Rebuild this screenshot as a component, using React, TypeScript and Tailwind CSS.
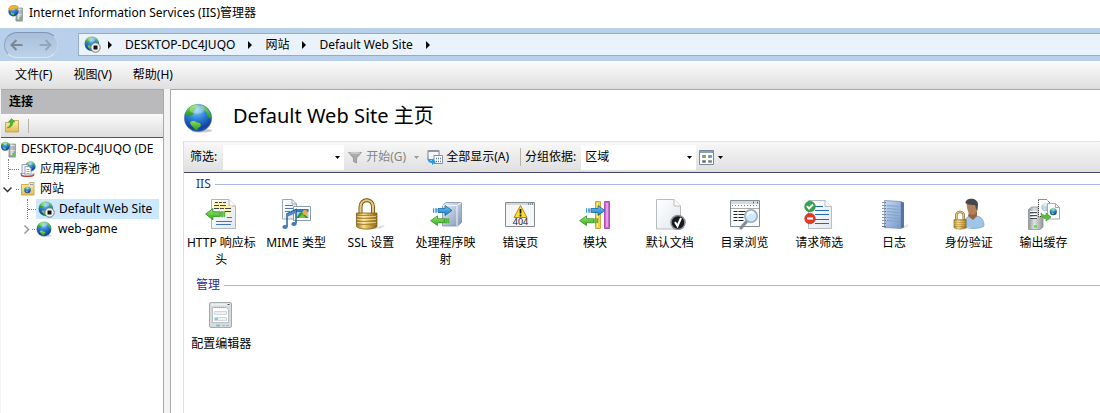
import type { ReactNode } from "react";

function Gradients() {
  return (
    <svg width="0" height="0" className="absolute" aria-hidden="true">
      <defs>
        <radialGradient id="sea" cx="0.45" cy="0.2" r="0.85">
          <stop offset="0" stopColor="#8fd4f2" />
          <stop offset="0.4" stopColor="#2f86d8" />
          <stop offset="0.8" stopColor="#163f9e" />
          <stop offset="1" stopColor="#2a5fc0" />
        </radialGradient>
        <linearGradient id="land" x1="0" y1="0" x2="0" y2="1">
          <stop offset="0" stopColor="#8be04e" />
          <stop offset="1" stopColor="#1f9a22" />
        </linearGradient>
        <linearGradient id="paper" x1="0" y1="0" x2="1" y2="1">
          <stop offset="0" stopColor="#ffffff" />
          <stop offset="1" stopColor="#e3e8ed" />
        </linearGradient>
        <linearGradient id="gold" x1="0" y1="0" x2="1" y2="0">
          <stop offset="0" stopColor="#a37a1e" />
          <stop offset="0.35" stopColor="#f5dc8a" />
          <stop offset="0.7" stopColor="#c49a38" />
          <stop offset="1" stopColor="#86621a" />
        </linearGradient>
        <linearGradient id="steel" x1="0" y1="0" x2="1" y2="1">
          <stop offset="0" stopColor="#e8eef6" />
          <stop offset="1" stopColor="#7f98ba" />
        </linearGradient>
        <linearGradient id="metal" x1="0" y1="0" x2="1" y2="0">
          <stop offset="0" stopColor="#8f9599" />
          <stop offset="0.4" stopColor="#dfe2e4" />
          <stop offset="1" stopColor="#92989c" />
        </linearGradient>
        <linearGradient id="green" x1="0" y1="0" x2="0" y2="1">
          <stop offset="0" stopColor="#9aec6c" />
          <stop offset="1" stopColor="#35a81d" />
        </linearGradient>
        <linearGradient id="blue" x1="0" y1="0" x2="0" y2="1">
          <stop offset="0" stopColor="#6cc8f5" />
          <stop offset="1" stopColor="#1b7ac6" />
        </linearGradient>
        <linearGradient id="notebook" x1="0" y1="0" x2="1" y2="1">
          <stop offset="0" stopColor="#c6d9f0" />
          <stop offset="1" stopColor="#7698c8" />
        </linearGradient>
        <linearGradient id="folder" x1="0" y1="0" x2="0" y2="1">
          <stop offset="0" stopColor="#fdf0b0" />
          <stop offset="1" stopColor="#e3bd55" />
        </linearGradient>
      </defs>
    </svg>
  );
}

function Earth() {
  return (
    <g>
      <circle cx="16" cy="16" r="14.7" fill="url(#sea)" stroke="#5f93b8" strokeWidth="0.5" />
      <path d="M2.4 11.5C4.500 5 9 2 14.500 1.500c1.500 1 .5 2-1 3 1 1.500 0 3-2 3.500-.5 2 1 2.500-.5 4-1.500 1.200-3 .5-4 2-1.500-1.500-3-.5-4.600-2.500Z" fill="url(#land)" />
      <path d="M8 20c2.500-1.500 5-.5 7 .8 2 .2 4.300 1 4 3.200-.5 2-3 2.500-3.500 4.500-1.200 1.300-3.500-.5-4.500-2.500C9.500 24 7 22.500 8 20Z" fill="url(#land)" />
      <path d="M19 2.200c3.500.8 7.500 4 9.300 7.300.8 2 1.900 4 1.900 6-1.500 1.500-2.700 1-3.700-1-1-1.500-.7-3-1.500-4.500-2-1-2.500-2.500-2-4-1.500-.5-3.500-1.800-4-3.800Z" fill="url(#land)" />
      <ellipse cx="15" cy="7" rx="8" ry="4.500" fill="#fff" opacity="0.3" />
    </g>
  );
}

function Globe({ className }: { className: string }) {
  return (
    <svg viewBox="0 0 32 32" className={className} aria-hidden="true">
      <ellipse cx="20" cy="29.500" rx="11" ry="2" fill="#000" opacity="0.2" />
      <Earth />
    </svg>
  );
}

function StoppedGlobe() {
  return (
    <svg viewBox="0 0 17 17" className="size-[17px] shrink-0" aria-hidden="true">
      <g transform="scale(0.49)"><Earth /></g>
      <circle cx="11.500" cy="11.500" r="4.700" fill="#f4f4f4" stroke="#666" strokeWidth="0.9" />
      <rect x="9.500" y="9.500" width="4" height="4" fill="#111" />
    </svg>
  );
}

function ServerIcon({ stamped = false }: { stamped?: boolean }) {
  return (
    <svg viewBox="0 0 16 17" className="h-[17px] w-4 shrink-0" aria-hidden="true">
      <path d="M8 3h6.500v12H8z" fill="url(#metal)" stroke="#8a9296" strokeWidth="0.7" />
      <path d="M9 5h5M9 7h5M9 9h5" stroke="#f5f7f8" />
      <path d="M9 6h5M9 8h5" stroke="#596268" strokeWidth="0.6" />
      <path d="M11.500 12h2.500v2h-2.500z" fill="#4ed12c" />
      <path d="M7 14.500h7l1 2H8z" fill="#8d9599" />
      <g transform={stamped ? "translate(0 1) scale(0.34)" : "translate(-0.5 0.5) scale(0.3)"}><Earth /></g>
      {stamped && <path d="M.5 4C2 0 6-.5 10 1.500L9 4.500C6 2.500 4 3 3 6Z" fill="#f2b62a" stroke="#c27d13" strokeWidth="0.5" />}
    </svg>
  );
}

function PoolIcon() {
  return (
    <svg viewBox="0 0 16 16" className="size-4 shrink-0" aria-hidden="true">
      <g transform="translate(5 0) scale(0.34)"><Earth /></g>
      <path d="M1 12c0 4 11 4 13 .5v2c-3 2-11 2-13 0Z" fill="#df5146" stroke="#8d3430" strokeWidth="0.5" />
      <path d="M2 3.500h6v9H2z" fill="#eef2f7" stroke="#8192a5" strokeWidth="0.8" />
      <path d="M5 5.500h4l2 2v6.500H5z" fill="#fff" stroke="#8192a5" strokeWidth="0.8" />
      <path d="M6.500 8.500h3M6.500 10.500h3M6.500 12.500h3" stroke="#8192a5" strokeWidth="0.8" />
    </svg>
  );
}

function SitesIcon() {
  return (
    <svg viewBox="0 0 16 16" className="size-4 shrink-0" aria-hidden="true">
      <path d="M1.500 3.500h7l1-2h4.500v12.500h-12.500z" fill="url(#folder)" stroke="#c69a38" strokeWidth="0.8" />
      <path d="M10 3.500h3" stroke="#6fa3cd" />
      <g transform="translate(4 5.500) scale(0.22)"><Earth /></g>
    </svg>
  );
}

function FolderUp() {
  return (
    <svg viewBox="0 0 16 16" className="size-4" aria-hidden="true">
      <path d="M1.500 4.500h6l1.500-2h5.500v11.500h-13z" fill="url(#folder)" stroke="#bf9a45" strokeWidth="0.8" />
      <path d="M3 10C5.500 9 6.500 6.500 6.500 4H4.500L7.500.5 11 4H9C9 7.500 6.500 10 3 10Z" fill="#43bd32" stroke="#268719" strokeWidth="0.4" />
    </svg>
  );
}

function Icon({ children }: { children: ReactNode }) {
  return <svg viewBox="0 0 32 32" className="size-8 shrink-0" aria-hidden="true">{children}</svg>;
}

function LeftArrow() {
  return (
    <>
      <path d="M.6 22.700 7.500 17.800v2.900h7v4h-7v2.900Z" fill="url(#green)" stroke="#329523" strokeWidth="0.8" />
      <path d="M15.300 20.500h1.700v4.400h-1.700zM17.800 20.500h1.200v4.400h-1.200z" fill="#5fc944" stroke="#329523" strokeWidth="0.4" />
    </>
  );
}

function RightArrow() {
  return (
    <>
      <path d="M22 12.500 15 7.500v3H8v4h7v3Z" fill="url(#blue)" stroke="#17689f" strokeWidth="0.8" />
      <path d="M5.200 10.300h1.700v4.400H5.200zM3 10.300h1.200v4.400H3z" fill="#3e9bd7" />
    </>
  );
}

function Lock() {
  return (
    <>
      <path d="M21 29 30 27l-3 3-8 1z" fill="#ddd" />
      <path d="M5.500 15V9c0-9 12.500-9 12.500 0v6" fill="none" stroke="#725116" strokeWidth="4" />
      <path d="M5.500 15V9c0-9 12.500-9 12.500 0v6" fill="none" stroke="#e8ca77" strokeWidth="2.200" />
      <path d="M1.500 15h20.500V28.500c-2 3.500-18.500 3.500-20.500 0Z" fill="url(#gold)" stroke="#80601c" strokeWidth="0.8" />
      <path d="M2 17.500h20M2 20.500h20M2 23.500h20M2 26.500h20" stroke="#a07c2c" strokeWidth="0.8" />
      <path d="M2 18.500h19M2 21.500h19M2 24.500h19" stroke="#fff2b8" strokeWidth="0.6" />
    </>
  );
}

function HeadersIcon() {
  return (
    <Icon>
      <path d="M6.500 1.500H24l6.500 6.500v22.500h-24z" fill="url(#paper)" stroke="#aeb6bd" />
      <path d="M24 1.500V8h6.500" fill="#fff" stroke="#aeb6bd" />
      <path d="M9 3.500h12v3H9zM9 8h18v3H9zM18 12.500h9v2.500h-9z" fill="#fff2a0" />
      <path d="M10 4.500h3m1 0h3m1 0h3M9 7.500h5m1 0h6M9 10.500h5m1 0h4m1 0h6M20 13.500h6" stroke="#444" />
      <path d="M22 19.500h5M11 23.500h16M11 26.500h15" stroke="#3f79b9" />
      <g transform="translate(0 -10) scale(1.05 1.150)"><LeftArrow /></g>
    </Icon>
  );
}

function MimeIcon() {
  return (
    <Icon>
      <path d="M2.500 1.500H12l4.500 4.500v15h-14z" fill="url(#paper)" stroke="#9ca8b1" />
      <path d="M12 1.500V6h4.500" fill="none" stroke="#9ca8b1" />
      <path d="M5 7.500h8M5 10.500h8M5 13.500h5" stroke="#5278a5" />
      <path d="M13.500 8.500h17v14h-17z" fill="#fff" stroke="#8b9cab" />
      <path d="M16 11h12.500v9H16z" fill="#9cd4f1" />
      <path d="M16 11h12.500v3H16z" fill="#277bca" />
      <path d="M16 20c3-3 3-6 6-6l6.500 6z" fill="#30972f" />
      <path d="m19 20 3-4 4 4z" fill="#75c340" />
      <circle cx="25" cy="14.500" r="2.500" fill="#f6a646" />
      <path d="M7 29V16l9-4.500v14" fill="none" stroke="#285d9d" strokeWidth="1.500" />
      <path d="m7 16 9-4v3l-9 4z" fill="#4f8ac8" />
      <ellipse cx="5" cy="29" rx="2.700" ry="2" fill="#3f7dba" />
      <ellipse cx="14" cy="26" rx="2.700" ry="2" fill="#3f7dba" />
    </Icon>
  );
}

function HandlerIcon() {
  return (
    <Icon>
      <path d="M12.500 7.500 16 4.500h15.500v20l-4 3.500h-15z" fill="url(#steel)" stroke="#8092aa" strokeWidth="0.8" />
      <path d="M12.500 7.500H27V28M27 7.500l4.500-3" fill="none" stroke="#f5f9fd" />
      <RightArrow />
      <LeftArrow />
    </Icon>
  );
}

function ErrorIcon() {
  return (
    <Icon>
      <path d="M1.500 4.500h29v24h-29z" fill="#f4f6f8" stroke="#848b91" />
      <path d="M2 6h28" stroke="#d3d8dd" strokeWidth="2" />
      <path d="M24 6h1M26 6h1M28 6h1" stroke="#344c68" />
      <path d="M16.500 7.500 23 19.500H10z" fill="#ffdb2e" stroke="#b28c10" />
      <path d="M16.500 11v4.500M16.500 16.500v2" stroke="#111" strokeWidth="1.700" />
      <text x="16.500" y="27" textAnchor="middle" fontFamily="Noto Sans, sans-serif" fontSize="9" fill="#222">404</text>
    </Icon>
  );
}

function ModulesIcon() {
  return (
    <Icon>
      <path d="M16.500 3.500h5v27h-5z" fill="#eed252" stroke="#c9aa3c" />
      <path d="M18.500 5v24" stroke="#fff3a5" />
      <path d="M25.500 3.500h5v27h-5z" fill="#c965c9" stroke="#b14db3" />
      <path d="M28 5v24" stroke="#efaff1" strokeWidth="1.500" />
      <g transform="translate(4)"><RightArrow /></g>
      <LeftArrow />
    </Icon>
  );
}

function DocumentIcon() {
  return (
    <Icon>
      <path d="M2.500 1.500H20l6.500 6.500v23h-24z" fill="url(#paper)" stroke="#b9bcbf" />
      <path d="M20 1.500V8h6.500" fill="#fff" stroke="#b9bcbf" />
      <circle cx="24" cy="24.500" r="7" fill="#181b1e" stroke="#8b8e91" strokeWidth="1.500" />
      <path d="m21 24 2.500 4 3.500-8" fill="none" stroke="#fff" strokeWidth="2" />
    </Icon>
  );
}

function BrowseIcon() {
  return (
    <Icon>
      <path d="M1.500 2.500h29v26h-29z" fill="#fafbfb" stroke="#858c91" />
      <path d="M2 4.500h28" stroke="#d3d9de" strokeWidth="3" />
      <path d="M24 4.500h1M28 4.500h1" stroke="#315e8c" strokeWidth="1.500" />
      <path d="M3 7.500h25" stroke="#777" strokeDasharray="1 2" />
      <path d="M2 10.500h28" stroke="#aaa" />
      <path d="M4.500 13.500h4m1 0h7M4.500 16.500h4m1 0h6M4.500 19.500h4m1 0h5M4.500 22.500h4m1 0h5" stroke="#222" />
      <path d="m18 23-6 7" stroke="#858c91" strokeWidth="3" strokeLinecap="round" />
      <circle cx="22" cy="18" r="6.200" fill="#cde9ff" stroke="#9aabb8" strokeWidth="1.500" />
      <path d="M18.500 17.500c1-4 5-4 6-2" fill="none" stroke="#fff" strokeWidth="2" />
    </Icon>
  );
}

function RequestIcon() {
  return (
    <Icon>
      <path d="M5.500 2.500H22l6.500 6v22h-23z" fill="url(#paper)" stroke="#b5bec6" />
      <path d="M22 2.500v6h6.500" fill="#fff" stroke="#b5bec6" />
      <path d="M12 8.500h8m-8 4h14m-14 4h14m-14 5h14m-14 4h14" stroke="#2467b5" strokeWidth="1.200" />
      <circle cx="7" cy="8.500" r="5.300" fill="#36a447" stroke="#228032" strokeWidth="0.6" />
      <path d="m4 8 2 2.500 4-4" fill="none" stroke="#fff" strokeWidth="1.900" />
      <circle cx="7" cy="20.500" r="5.300" fill="#e33924" stroke="#af3022" strokeWidth="0.6" />
      <path d="M4 20.500h6" stroke="#fff" strokeWidth="2.200" />
    </Icon>
  );
}

function LogIcon() {
  return (
    <Icon>
      <path d="m25 28 5-2v3l-6 2z" fill="#e5e5e5" />
      <path d="M6.500 2.500 23 3.500v27l-16.500-1z" fill="url(#notebook)" stroke="#7391bb" strokeWidth="0.800" />
      <path d="m23 3.500 3 1v25l-3 1z" fill="#54779f" />
      <path d="m9 7.500 12 1m-12 2 12 1m-12 2 12 1m-12 2 12 1m-12 2 12 1m-12 2 12 1" stroke="#82a1cb" />
      <path d="M4 4.500h4M4 7.500h4M4 10.500h4M4 13.500h4M4 16.500h4M4 19.500h4M4 22.500h4M4 25.500h4M4 28.500h4" stroke="#66707c" strokeWidth="1.200" />
      <path d="M4 4h3M4 7h3M4 10h3M4 13h3M4 16h3M4 19h3M4 22h3M4 25h3" stroke="#eef2f7" strokeWidth="0.600" />
    </Icon>
  );
}

function AuthIcon() {
  return (
    <Icon>
      <path d="M11 29c0-7 2-10 6-11h7c5 1 7 5 7 10-4 3-14 3-20 1Z" fill="#9fc5e8" stroke="#75a0c8" strokeWidth="0.8" />
      <path d="m15 18 5 4 4-4v-4h-8z" fill="#9a6340" />
      <path d="M13.500 6c0-5 11-5 11 1v4c0 6-8 9-10 1z" fill="#b5805a" />
      <path d="M12.500 5c0-6 13-6 12.500 2l-1 6-2-6c-4 0-6 0-9.500-2Z" fill="#45484b" />
      <g transform="translate(0 12.500) scale(0.6)"><Lock /></g>
    </Icon>
  );
}

function CacheIcon() {
  return (
    <Icon>
      <path d="m.5 11.500 3-2.500h11.500v20l-3 2.500H.5z" fill="url(#metal)" stroke="#8a9094" strokeWidth="0.8" />
      <path d="M2 14.500h7M2 17.500h7M2 20.500h7" stroke="#454b4f" />
      <path d="M2 13.500h7M2 16.500h7M2 19.500h7" stroke="#fff" />
      <path d="M6 28.500h3" stroke="#5bd838" strokeWidth="2" />
      <path d="M10.500 1.500h8l4 4v13h-12z" fill="#fff" stroke="#222" strokeDasharray="1 1" />
      <g opacity="0.35" transform="translate(13 5) scale(0.27)"><Earth /></g>
      <path d="M19.500 5.500h8l4 4v11.500h-12z" fill="#fff" stroke="#a4abb0" />
      <path d="M27.500 5.500v4h4" fill="none" stroke="#a4abb0" />
      <g transform="translate(21.500 10) scale(0.24)"><Earth /></g>
      <path d="M13 15c2 2 3 2.500 5 2.500V15l5 4-5 4v-2.500c-4 0-5-2.500-5-5.500Z" fill="#59bf37" stroke="#32891f" strokeWidth="0.6" />
    </Icon>
  );
}

function ConfigIcon() {
  return (
    <Icon>
      <rect x="4.500" y="3.500" width="22" height="25" rx="1.500" fill="#d6dadd" stroke="#a4abb0" />
      <path d="M6 5.500h19" stroke="#eef0f2" strokeWidth="2" />
      <path d="M22.500 5.500h2" stroke="#40505d" />
      <path d="M7.500 8.500h14l2 2v13h-16z" fill="#fff" stroke="#b9c0c5" />
      <path d="M10 8.500h9" stroke="#98a1a7" strokeDasharray="1 1" />
      <path d="M9.500 12.500h12v3h-12zM9.500 18.500h12v3h-12z" fill="#eef1f3" stroke="#c3c9cd" strokeWidth="0.7" />
      <path d="M10 20h3M11 26.500h4" stroke="#4bc6ef" strokeWidth="1.500" />
      <path d="M17 26.500h3M21 26.500h3" stroke="#b3babf" />
    </Icon>
  );
}

function Caret({ className = "" }: { className?: string }) {
  return <svg viewBox="0 0 5 3" className={`h-[3px] w-[5px] shrink-0 fill-current ${className}`} aria-hidden="true"><path d="M0 0h5L2.500 3z" /></svg>;
}

function Crumb() {
  return <svg viewBox="0 0 4 8" className="h-2 w-1 shrink-0" aria-hidden="true"><path d="M0 0 4 4 0 8z" /></svg>;
}

function Chevron({ open = false }: { open?: boolean }) {
  return (
    <svg viewBox="0 0 9 9" className="size-[9px] shrink-0" fill="none" aria-hidden="true">
      {open ? <path d="M.5 2.500 4.500 6.500l4-4" stroke="#333" strokeWidth="1.500" /> : <path d="m2.500.5 4 4-4 4" stroke="#999" strokeWidth="1.500" />}
    </svg>
  );
}

const features: { name: string; icon: ReactNode }[] = [
  { name: "HTTP 响应标头", icon: <HeadersIcon /> },
  { name: "MIME 类型", icon: <MimeIcon /> },
  { name: "SSL 设置", icon: <Icon><Lock /></Icon> },
  { name: "处理程序映射", icon: <HandlerIcon /> },
  { name: "错误页", icon: <ErrorIcon /> },
  { name: "模块", icon: <ModulesIcon /> },
  { name: "默认文档", icon: <DocumentIcon /> },
  { name: "目录浏览", icon: <BrowseIcon /> },
  { name: "请求筛选", icon: <RequestIcon /> },
  { name: "日志", icon: <LogIcon /> },
  { name: "身份验证", icon: <AuthIcon /> },
  { name: "输出缓存", icon: <CacheIcon /> },
];

function Feature({ name, icon }: { name: string; icon: ReactNode }) {
  return (
    <button type="button" className="flex min-w-0 flex-col items-center gap-1 px-0.5 text-center leading-[17px]">
      {icon}
      <span className="w-full">{name}</span>
    </button>
  );
}

function Group({ title, children }: { title: string; children: ReactNode }) {
  return (
    <section>
      <div className="flex h-[22px] items-center gap-1 pl-3">
        <h2 className="text-[#1e2f8c]">{title}</h2>
        <span className="h-px flex-1 bg-[#a9b9de]" />
      </div>
      <div className="grid max-w-[897px] grid-cols-12 pt-[3px]">{children}</div>
    </section>
  );
}

export default function App() {
  return (
    <div className="flex min-h-screen flex-col bg-[#f3f3f3] font-['Noto_Sans','Noto_Sans_CJK_SC',sans-serif] text-[12px] leading-4 text-black">
      <Gradients />
      <header>
        <div className="flex h-7 items-center gap-1 bg-white pb-0.5 pl-2">
          <ServerIcon stamped />
          <h1 className="pl-px">Internet Information Services (IIS)管理器</h1>
        </div>
        <div className="flex h-[33px] items-center bg-[#b9d0ea] pl-1">
          <div className="flex h-[26px] w-[54px] shrink-0 items-center justify-between rounded-full border border-t-[#8195b1] border-r-[#c5d6ea] border-b-[#dce8f5] border-l-[#8ea4c0] bg-linear-to-b from-[#a8bfdb] to-[#bcd2ea] px-[5px]">
            <button type="button" aria-label="后退">
              <svg viewBox="0 0 13 12" className="h-3 w-[13px]" fill="none" stroke="#7b8794" strokeWidth="2" aria-hidden="true"><path d="M12.500 6H2M6.500 1 1.500 6l5 5" /></svg>
            </button>
            <button type="button" aria-label="前进">
              <svg viewBox="0 0 13 12" className="h-3 w-[13px]" fill="none" stroke="#93a5b9" strokeWidth="2" aria-hidden="true"><path d="M.5 6H11M6.500 1l5 5-5 5" /></svg>
            </button>
          </div>
          <nav aria-label="路径" className="ml-5 flex h-[23px] flex-1 items-center gap-[13px] border border-r-0 border-[#94abc9] bg-[#eaf2fb] pl-[5px]">
            <span className="flex items-center gap-[7px]"><StoppedGlobe /><Crumb /></span>
            <a href="#server">DESKTOP-DC4JUQO</a>
            <Crumb />
            <a href="#sites">网站</a>
            <Crumb />
            <a href="#site">Default Web Site</a>
            <Crumb />
          </nav>
        </div>
        <nav aria-label="菜单" className="flex h-7 items-center gap-[21px] border-b border-[#dcdcdc] bg-linear-to-b from-[#fbfbfb] to-[#e1e0e1] pl-[15px]">
          <button type="button">文件(F)</button>
          <button type="button">视图(V)</button>
          <button type="button">帮助(H)</button>
        </nav>
      </header>

      <div className="flex flex-1">
        <aside className="ml-px w-[163px] shrink-0 overflow-hidden border-t border-r border-[#aaa] bg-white">
          <h2 className="flex h-6 items-center bg-[#bab9bb] pl-2 font-bold">连接</h2>
          <div className="flex h-6 items-center gap-2 border-b border-[#50506c] bg-linear-to-b from-[#fafafa] to-[#dfdedf] pl-[3px]">
            <button type="button" aria-label="向上"><FolderUp /></button>
            <span className="h-[14px] w-px bg-[#b8b6a5]" />
          </div>
          <ul className="pt-px whitespace-nowrap">
            <li className="flex h-5 items-center gap-1"><ServerIcon />DESKTOP-DC4JUQO (DE</li>
            <li className="flex h-5 items-center pl-[7px]">
              <span className="h-5 border-l border-dotted border-[#777]" />
              <span className="mr-px w-[10px] border-t border-dotted border-[#777]" />
              <PoolIcon /><span className="ml-1">应用程序池</span>
            </li>
            <li className="flex h-5 items-center pl-[2px]">
              <Chevron open />
              <span className="mr-px ml-1 w-[3px] border-t border-dotted border-[#777]" />
              <SitesIcon /><span className="ml-1">网站</span>
            </li>
            <li className="flex h-5 items-center pl-[26px]">
              <span className="h-5 border-l border-dotted border-[#777]" />
              <span className="w-2 border-t border-dotted border-[#777]" />
              <span className="flex h-5 flex-1 items-center gap-1 bg-[#cce8ff] pl-[2px] mr-1"><StoppedGlobe />Default Web Site</span>
            </li>
            <li className="flex h-5 items-center pl-[21px]">
              <Chevron />
              <span className="mx-px w-[3px] border-t border-dotted border-[#777]" />
              <Globe className="size-4 shrink-0" /><span className="ml-[6px]">web-game</span>
            </li>
          </ul>
        </aside>

        <main className="ml-[6px] flex min-w-0 flex-1 flex-col border-t border-l border-[#aaa] bg-white pl-3">
          <div className="flex h-[51px] items-center gap-5">
            <Globe className="mt-1 size-[30px]" />
            <h1 className="text-[20px] leading-6">Default Web Site 主页</h1>
          </div>
          <div className="flex-1 border-l border-[#dedede]">
            <div className="flex h-8 items-center border-t border-b border-t-[#e4e4e4] border-b-[#45456b] bg-linear-to-b from-[#f8f8f8] to-[#e0dfe0] pl-[6px]">
              <label htmlFor="filter">筛选:</label>
              <div className="ml-[6px] flex h-[25px] w-[121px] items-center bg-white pr-1">
                <input id="filter" className="h-full min-w-0 flex-1 px-1 outline-none" />
                <button type="button" aria-label="筛选历史" className="flex"><Caret /></button>
              </div>
              <button type="button" className="ml-1 flex items-center gap-1 text-[#858585]">
                <svg viewBox="0 0 14 13" className="h-[13px] w-[14px]" aria-hidden="true"><path d="M.5 1.500h13L8.500 7v5l-3-1.500V7z" fill="#aaa" stroke="#999" /><ellipse cx="7" cy="2" rx="6" ry="1.200" fill="#c9c9c9" /></svg>
                开始(G)
              </button>
              <button type="button" aria-label="开始选项" className="mx-1 flex px-1 text-[#999]"><Caret /></button>
              <button type="button" className="flex items-center gap-[3px]">
                <svg viewBox="0 0 16 16" className="size-4" aria-hidden="true"><path d="M1 1.500h11v9H1z" fill="#f4f7fb" stroke="#74869a" /><path d="M1 2h11" stroke="#8b99a8" strokeWidth="2" /><path d="M7 6.500h8.500v8H7z" fill="#fff" stroke="#8190a4" /><path d="M9 9.500h5M9 12.500h5" stroke="#637cac" strokeWidth="1.500" strokeDasharray="1 1" /><path d="M1 7.500c0 3 1 4 4 4v-2l4 3.500-4 3v-2c-4 0-5-3-4-6.500Z" fill="#2a9bdd" /></svg>
                全部显示(A)
              </button>
              <span className="mr-1 ml-[11px] h-[18px] w-px bg-[#b6b5a3]" />
              <label htmlFor="group">分组依据:</label>
              <div className="ml-[5px] grid h-[25px] w-[115px] items-center bg-white">
                <select id="group" className="col-start-1 row-start-1 h-full w-full appearance-none bg-transparent pr-4 pl-1 outline-none"><option>区域</option></select>
                <Caret className="pointer-events-none col-start-1 row-start-1 mr-1 justify-self-end" />
              </div>
              <button type="button" aria-label="视图" className="ml-[3px] flex items-center gap-1">
                <svg viewBox="0 0 15 15" className="size-[15px]" aria-hidden="true"><path d="M.5.500h14v14H.500z" fill="#fff" stroke="#7c8794" /><path d="M1 2h13" stroke="#8ea0b5" strokeWidth="2" /><path d="M3.500 5.500h3v2h-3zM3.500 10.500h3v2h-3zM9.500 5.500h3v2h-3zM9.500 10.500h3v2h-3z" fill="#8cb8b0" stroke="#8b96a1" /><path d="M4 6.500h2" stroke="#77b83c" /><path d="M4 11.500h2" stroke="#2867c0" /><path d="M10 6.500h2" stroke="#43a9c8" /><path d="M10 11.500h2" stroke="#cd6f39" /></svg>
                <Caret />
              </button>
            </div>
            <Group title="IIS">
              {features.map((feature) => <Feature key={feature.name} {...feature} />)}
            </Group>
            <div className="pt-[6px]">
              <Group title="管理"><Feature name="配置编辑器" icon={<ConfigIcon />} /></Group>
            </div>
          </div>
        </main>
      </div>
    </div>
  );
}
